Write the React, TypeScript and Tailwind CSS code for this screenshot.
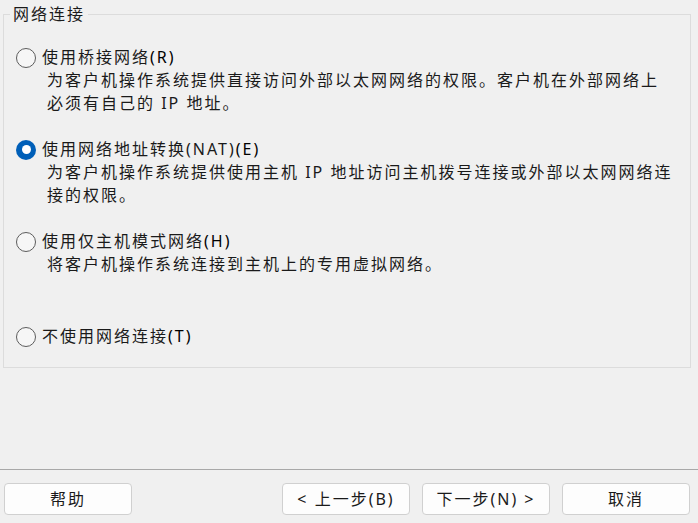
import React from "react";

type Option = {
  label: string;
  hotkey: string;
  lines: string[];
  checked?: boolean;
  spacing: string;
};

const options: Option[] = [
  {
    label: "使用桥接网络",
    hotkey: "(R)",
    lines: [
      "为客户机操作系统提供直接访问外部以太网网络的权限。客户机在外部网络上",
      "必须有自己的 IP 地址。",
    ],
    spacing: "mt-[21px]",
  },
  {
    label: "使用网络地址转换(NAT)",
    hotkey: "(E)",
    lines: [
      "为客户机操作系统提供使用主机 IP 地址访问主机拨号连接或外部以太网网络连",
      "接的权限。",
    ],
    checked: true,
    spacing: "mt-[23px]",
  },
  {
    label: "使用仅主机模式网络",
    hotkey: "(H)",
    lines: ["将客户机操作系统连接到主机上的专用虚拟网络。"],
    spacing: "mt-[23px]",
  },
  {
    label: "不使用网络连接",
    hotkey: "(T)",
    lines: [],
    spacing: "mt-[49px]",
  },
];

function Radio({ checked }: { checked?: boolean }) {
  if (checked) {
    return (
      <span className="flex h-[20px] w-[20px] flex-shrink-0 items-center justify-center rounded-full bg-[#005fb8]">
        <span className="h-[9px] w-[9px] rounded-full bg-white" />
      </span>
    );
  }
  return (
    <span className="h-[20px] w-[20px] flex-shrink-0 rounded-full border border-[#5c5c5c] bg-[#f6f6f6]" />
  );
}

function NetworkOption({ option }: { option: Option }) {
  return (
    <div className={option.spacing}>
      <label className="flex h-[23px] items-center pl-[12px]">
        <Radio checked={option.checked} />
        <span className="ml-[6px] text-[#1a1a1a]">
          {option.label}
          <span className="text-black">{option.hotkey}</span>
        </span>
      </label>
      {option.lines.length > 0 && (
        <p className="whitespace-nowrap pl-[43px] text-[#1a1a1a]">
          {option.lines.map((line, i) => (
            <React.Fragment key={i}>
              {i > 0 && <br />}
              {line}
            </React.Fragment>
          ))}
        </p>
      )}
    </div>
  );
}

function DialogButton({ children }: { children: React.ReactNode }) {
  return (
    <button className="flex h-[32px] w-[128px] items-center justify-center rounded-[4px] border border-[#d0d0d0] bg-[#fdfdfd] text-[#1a1a1a]">
      {children}
    </button>
  );
}

export default function App() {
  return (
    <div className="flex h-[523px] w-[698px] flex-col overflow-hidden bg-[#f0f0f0] font-['Noto_Sans','Noto_Sans_CJK_SC',sans-serif] text-[16px] leading-[23px] tracking-[2px]">
      <fieldset className="ml-[3px] mt-[3px] h-[365px] w-[688px] border border-[#dcdcdc]">
        <legend className="ml-[6px] px-[3px] leading-[22px] text-[#1a1a1a]">
          网络连接
        </legend>
        {options.map((option) => (
          <NetworkOption key={option.hotkey} option={option} />
        ))}
      </fieldset>

      <div className="flex-1" />

      <div className="border-t border-[#a8a8a8]" />
      <div className="flex items-start justify-between pb-[8px] pl-[4px] pr-[8px] pt-[13px]">
        <DialogButton>帮助</DialogButton>
        <div className="flex gap-[12px]">
          <DialogButton>&lt; 上一步(B)</DialogButton>
          <DialogButton>下一步(N) &gt;</DialogButton>
          <DialogButton>取消</DialogButton>
        </div>
      </div>
    </div>
  );
}
